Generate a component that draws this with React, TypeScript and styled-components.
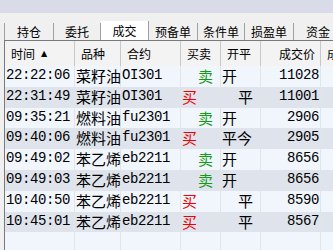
import styled, { createGlobalStyle } from "styled-components";

const GlobalStyle = createGlobalStyle`
  html, body {
    margin: 0;
    padding: 0;
    background: #f0f0f0;
  }
`;

const COLS = "70px 46px 60px 40px 40px 60px 90px";

const Frame = styled.div`
  width: 333px;
  height: 250px;
  overflow: hidden;
  display: flex;
  flex-direction: column;
  background: #f0f0f0;
  font-family: "Noto Sans CJK SC", sans-serif;
`;

const TitleBand = styled.div`
  flex: none;
  height: 13px;
  background: #d9dbe8;
`;

const TabBar = styled.div`
  flex: none;
  height: 27px;
  display: flex;
  align-items: flex-end;
  padding-left: 4px;
  white-space: nowrap;
`;

const Tab = styled.div<{ $w: number; $active?: boolean }>`
  flex: none;
  box-sizing: border-box;
  width: ${(p) => p.$w}px;
  height: ${(p) => (p.$active ? 19 : 17)}px;
  display: flex;
  align-items: center;
  justify-content: center;
  font-size: 12px;
  color: #000;
  background: ${(p) => (p.$active ? "#ffffff" : "#f0f0f0")};
  border-right: 1px solid #a0a0a0;
  &:first-child {
    border-left: 1px solid #a0a0a0;
  }
`;

const Grid = styled.div`
  flex: 1;
  margin-left: 4px;
  border-left: 1px solid #7a7a7a;
  border-top: 1px solid #7a7a7a;
  background: #f1f6fd;
  display: flex;
  flex-direction: column;
`;

const HeadRow = styled.div`
  flex: none;
  height: 25px;
  display: grid;
  grid-template-columns: ${COLS};
  background: #f3f3f3;
`;

const HeadCell = styled.div<{ $right?: boolean }>`
  display: flex;
  align-items: center;
  justify-content: ${(p) => (p.$right ? "flex-end" : "flex-start")};
  padding: 0 5px 0 6px;
  font-size: 12px;
  color: #000;
  white-space: nowrap;
  border-right: 1px solid #c8c8c8;
`;

const SortMark = styled.span`
  font-size: 8px;
  margin-left: 6px;
  font-family: "DejaVu Sans", sans-serif;
`;

const Row = styled.div<{ $even: boolean }>`
  flex: none;
  height: 20.8px;
  display: grid;
  grid-template-columns: ${COLS};
  background: ${(p) => (p.$even ? "#dfe4ec" : "#f1f6fd")};
`;

const Filler = styled.div`
  flex: 1;
  display: grid;
  grid-template-columns: ${COLS};
`;

const Cell = styled.div<{ $right?: boolean; $tone?: "buy" | "sell" }>`
  display: block;
  line-height: 19px;
  text-align: ${(p) => (p.$right ? "right" : "left")};
  padding: 0 1px;
  white-space: pre;
  font-family: "Liberation Mono", monospace;
  font-size: 14px;
  letter-spacing: -0.4px;
  color: ${(p) =>
    p.$tone === "buy" ? "#f00000" : p.$tone === "sell" ? "#149a14" : "#000"};
  border-right: 1px solid #e2e4e8;
  overflow: visible;
`;

const Han = styled.span`
  font-family: "Noto Sans CJK SC", sans-serif;
  font-size: 15px;
  letter-spacing: 0;
`;

const isHan = (ch: string) => /[\u3400-\u9fff]/.test(ch);

// split a string into runs so Chinese and ascii get their own font
const Mixed = ({ text }: { text: string }) => {
  const runs: string[] = [];
  for (const ch of text) {
    const last = runs[runs.length - 1];
    if (last && isHan(last[0]) === isHan(ch)) runs[runs.length - 1] = last + ch;
    else runs.push(ch);
  }
  return (
    <>
      {runs.map((r, i) =>
        isHan(r[0]) ? <Han key={i}>{r}</Han> : <span key={i}>{r}</span>
      )}
    </>
  );
};

const tabs = [
  { label: "持仓", w: 50 },
  { label: "委托", w: 47 },
  { label: "成交", w: 48, active: true },
  { label: "预备单", w: 49 },
  { label: "条件单", w: 47 },
  { label: "损盈单", w: 49 },
  { label: "资金", w: 49 },
];

const trades = [
  { time: "22:22:06", name: "菜籽油", code: "OI301", side: "sell", oc: "开", price: "11028" },
  { time: "22:31:49", name: "菜籽油", code: "OI301", side: "buy", oc: "  平", price: "11001" },
  { time: "09:35:21", name: "燃料油", code: "fu2301", side: "sell", oc: "开", price: "2906" },
  { time: "09:40:06", name: "燃料油", code: "fu2301", side: "buy", oc: "平今", price: "2905" },
  { time: "09:49:02", name: "苯乙烯", code: "eb2211", side: "sell", oc: "开", price: "8656" },
  { time: "09:49:03", name: "苯乙烯", code: "eb2211", side: "sell", oc: "开", price: "8656" },
  { time: "10:40:50", name: "苯乙烯", code: "eb2211", side: "buy", oc: "  平", price: "8590" },
  { time: "10:45:01", name: "苯乙烯", code: "eb2211", side: "buy", oc: "  平", price: "8567" },
] as const;

export default function App() {
  return (
    <>
      <GlobalStyle />
      <Frame>
        <TitleBand />
        <TabBar>
          {tabs.map((t) => (
            <Tab key={t.label} $w={t.w} $active={t.active}>
              {t.label}
            </Tab>
          ))}
        </TabBar>
        <Grid>
          <HeadRow>
            <HeadCell>
              时间<SortMark>▲</SortMark>
            </HeadCell>
            <HeadCell>品种</HeadCell>
            <HeadCell>合约</HeadCell>
            <HeadCell>买卖</HeadCell>
            <HeadCell>开平</HeadCell>
            <HeadCell $right>成交价</HeadCell>
            <HeadCell>成交量</HeadCell>
          </HeadRow>
          {trades.map((t, i) => (
            <Row key={i} $even={i % 2 === 1}>
              <Cell>{t.time}</Cell>
              <Cell>
                <Mixed text={t.name} />
              </Cell>
              <Cell>{t.code}</Cell>
              <Cell $tone={t.side}>
                <Mixed text={t.side === "buy" ? "买" : "  卖"} />
              </Cell>
              <Cell>
                <Mixed text={t.oc} />
              </Cell>
              <Cell $right>{t.price}</Cell>
              <Cell />
            </Row>
          ))}
          <Filler>
            {Array.from({ length: 7 }, (_, i) => (
              <Cell key={i} />
            ))}
          </Filler>
        </Grid>
      </Frame>
    </>
  );
}
